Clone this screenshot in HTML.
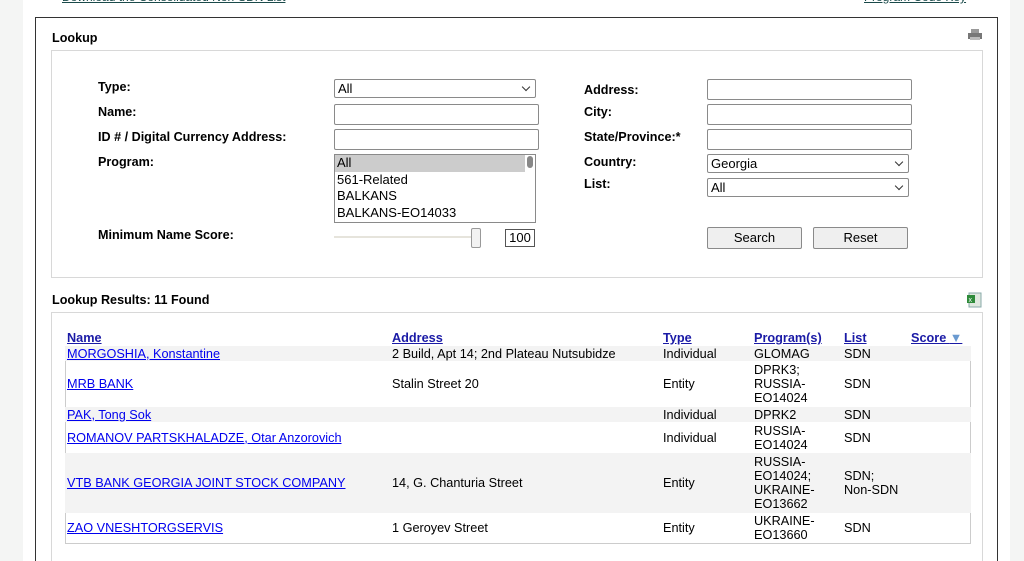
<!DOCTYPE html>
<html style="height:561px;overflow:hidden"><head><style>
*{margin:0;padding:0;box-sizing:border-box}
body{width:1024px;height:561px;overflow:hidden;background:#f4f5f4;font-family:"Liberation Sans",Arial,sans-serif;font-size:12px;color:#000;position:relative}
.main{position:absolute;left:23px;top:0;width:987px;height:561px;background:#fff}
.abs{position:absolute}
.lnk{color:#1a4a4a;text-decoration:underline;font-size:12px}
.outer{position:absolute;left:35px;top:17px;width:963px;height:544px;border:1px solid #333;border-bottom:none}
.panel{position:absolute;border:1px solid #d8d8d8}
.lbl{position:absolute;font-weight:bold;font-size:12.6px}
.inp{position:absolute;border:1px solid #8a8a8a;border-radius:2px;height:21px;background:#fff}
.sel{position:absolute;border:1px solid #8a8a8a;border-radius:2px;height:19px;background:#fff;font-size:13px;padding-left:3px;line-height:17px}
.sel:after{content:"";position:absolute;right:6px;top:4px;width:5px;height:5px;border-right:1px solid #333;border-bottom:1px solid #333;transform:rotate(45deg)}
.btn{position:absolute;height:22px;border:1px solid #8a8a8a;border-radius:2px;background:#efefef;text-align:center;font-size:13px;line-height:20px}
table{position:absolute;left:65px;top:326px;width:906px;border-collapse:collapse;font-size:12.7px}
th{text-align:left;font-weight:bold;color:#1a1aa6;text-decoration:underline;height:20px;vertical-align:bottom;padding:0 2px 1px}
td{padding:0 2px;line-height:14px;vertical-align:middle}
td a{color:#0000ee;text-decoration:underline}
tr.g td{background:#f3f3f3}
</style></head><body>
<div class="main"></div>
<a class="abs lnk" style="left:62px;top:-10px">Download the Consolidated Non-SDN List</a>
<a class="abs lnk" style="left:864px;top:-10px">Program Code Key</a>
<div class="outer"></div>
<div class="lbl" style="left:52px;top:31px">Lookup</div>
<svg class="abs" style="left:968px;top:29px" width="14" height="12"><rect x="3" y="0" width="8" height="4" fill="#999"/><rect x="0" y="4" width="14" height="6" fill="#777"/><rect x="2" y="8" width="10" height="3" fill="#bbb"/></svg>
<div class="panel" style="left:51px;top:50px;width:932px;height:228px"></div>
<div class="lbl" style="left:98px;top:80px">Type:</div>
<div class="lbl" style="left:98px;top:105px">Name:</div>
<div class="lbl" style="left:98px;top:130px">ID # / Digital Currency Address:</div>
<div class="lbl" style="left:98px;top:155px">Program:</div>
<div class="lbl" style="left:98px;top:228px">Minimum Name Score:</div>
<div class="sel" style="left:334px;top:79px;width:202px">All</div>
<div class="inp" style="left:334px;top:104px;width:205px"></div>
<div class="inp" style="left:334px;top:129px;width:205px"></div>
<div class="abs" style="left:334px;top:154px;width:202px;height:69px;border:1px solid #8a8a8a;font-size:13px;line-height:16.7px;padding-left:2px">
<div style="background:#ccc;margin-left:-2px;padding-left:2px;margin-right:10px">All</div><div>561-Related</div><div>BALKANS</div><div>BALKANS-EO14033</div>
<div class="abs" style="right:2px;top:1px;width:6px;height:12px;background:#888;border-radius:3px"></div></div>
<div class="abs" style="left:334px;top:236px;width:140px;height:2px;background:#e6e4dc"></div>
<div class="abs" style="left:471px;top:228px;width:10px;height:20px;border:1px solid #999;border-radius:2px;background:#f2f2f2"></div>
<div class="abs" style="left:505px;top:229px;width:30px;height:18px;border:1px solid #555;font-size:13px;text-align:center;line-height:16px">100</div>
<div class="lbl" style="left:584px;top:83px">Address:</div>
<div class="lbl" style="left:584px;top:105px">City:</div>
<div class="lbl" style="left:584px;top:130px">State/Province:*</div>
<div class="lbl" style="left:584px;top:155px">Country:</div>
<div class="lbl" style="left:584px;top:177px">List:</div>
<div class="inp" style="left:707px;top:79px;width:205px"></div>
<div class="inp" style="left:707px;top:104px;width:205px"></div>
<div class="inp" style="left:707px;top:129px;width:205px"></div>
<div class="sel" style="left:707px;top:154px;width:202px">Georgia</div>
<div class="sel" style="left:707px;top:178px;width:202px">All</div>
<div class="btn" style="left:707px;top:227px;width:95px">Search</div>
<div class="btn" style="left:813px;top:227px;width:95px">Reset</div>
<div class="lbl" style="left:52px;top:293px">Lookup Results: 11 Found</div>
<svg class="abs" style="left:967px;top:292px" width="15" height="16"><rect x="2" y="1" width="12" height="14" fill="#dfe8df" stroke="#8aa" /><rect x="0" y="3" width="8" height="8" fill="#2e8b3a"/><text x="1.5" y="10" font-size="7" fill="#fff" font-family="Liberation Sans">x</text></svg>
<div class="panel" style="left:51px;top:312px;width:932px;height:249px;border-bottom:none"></div>
<div class="abs" style="left:65px;top:346px;width:906px;height:198px;border:1px solid #ccc"></div>
<table>
<tr><th style="width:325px">Name</th><th style="width:271px">Address</th><th style="width:91px">Type</th><th style="width:90px">Program(s)</th><th style="width:67px">List</th><th>Score <span style="color:#6a9ad0;text-decoration:none">▼</span></th></tr>
<tr class="g" style="height:15px"><td><a>MORGOSHIA, Konstantine</a></td><td>2 Build, Apt 14; 2nd Plateau Nutsubidze</td><td>Individual</td><td>GLOMAG</td><td>SDN</td><td></td></tr>
<tr style="height:46px"><td><a>MRB BANK</a></td><td>Stalin Street 20</td><td>Entity</td><td>DPRK3;<br>RUSSIA-<br>EO14024</td><td>SDN</td><td></td></tr>
<tr class="g" style="height:15px"><td><a>PAK, Tong Sok</a></td><td></td><td>Individual</td><td>DPRK2</td><td>SDN</td><td></td></tr>
<tr style="height:31px"><td><a>ROMANOV PARTSKHALADZE, Otar Anzorovich</a></td><td></td><td>Individual</td><td>RUSSIA-<br>EO14024</td><td>SDN</td><td></td></tr>
<tr class="g" style="height:60px"><td><a>VTB BANK GEORGIA JOINT STOCK COMPANY</a></td><td>14, G. Chanturia Street</td><td>Entity</td><td>RUSSIA-<br>EO14024;<br>UKRAINE-<br>EO13662</td><td>SDN;<br>Non-SDN</td><td></td></tr>
<tr style="height:30px"><td><a>ZAO VNESHTORGSERVIS</a></td><td>1 Geroyev Street</td><td>Entity</td><td>UKRAINE-<br>EO13660</td><td>SDN</td><td></td></tr>
</table>
</body></html>
